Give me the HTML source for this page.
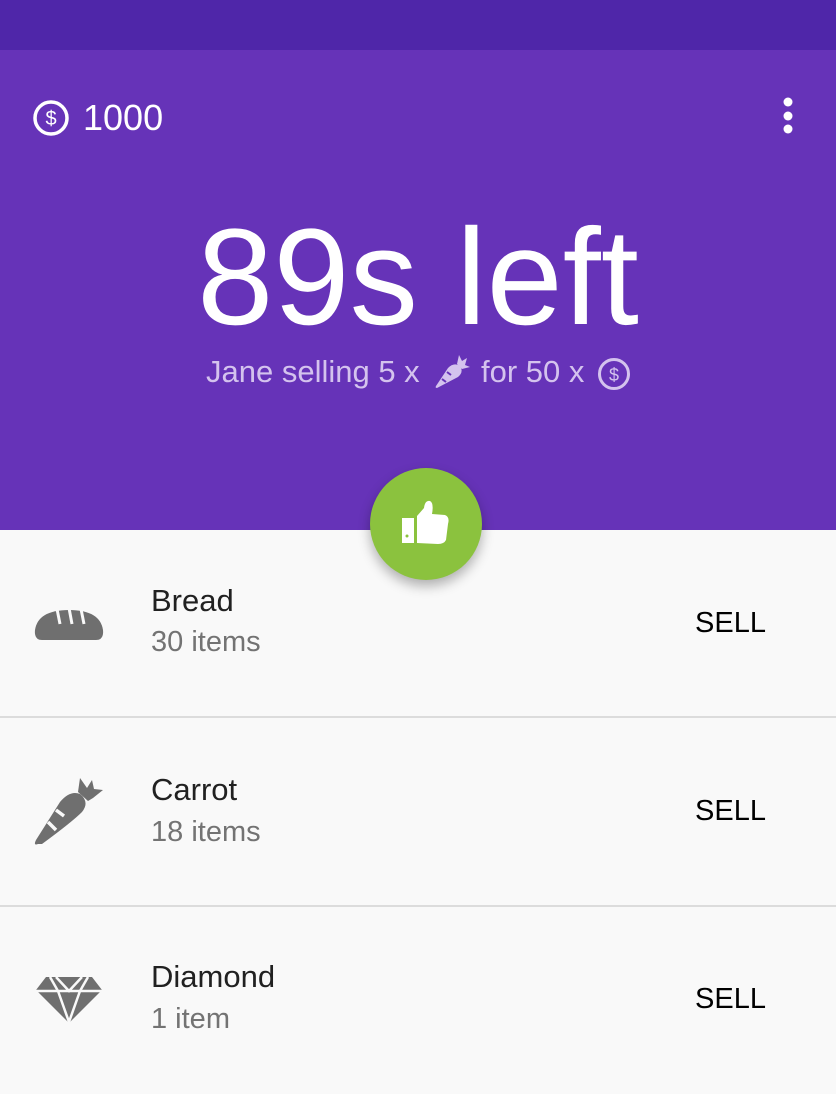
<!DOCTYPE html>
<html><head><meta charset="utf-8"><style>
*{margin:0;padding:0;box-sizing:border-box}
body{width:836px;height:1094px;overflow:hidden;background:#f9f9f9;font-family:"Liberation Sans",Roboto,sans-serif;position:relative}
.status{position:absolute;left:0;top:0;width:836px;height:50px;background:#4f26a9}
.head{position:absolute;left:0;top:50px;width:836px;height:480px;background:#6633b8}
.abs{position:absolute;white-space:nowrap}
.name{position:absolute;left:151px;font-size:31px;color:#212121}
.sub{position:absolute;left:151px;font-size:29px;color:#737373}
.sell{position:absolute;right:70px;font-size:29px;color:#000}
.div{position:absolute;left:0;width:836px;height:2px;background:#dcdcdc}
.st{position:absolute;font-size:31px;color:#d4c3ee;white-space:nowrap}
</style></head><body>
<div class="status"></div>
<div class="head"></div>
<svg class="abs" style="left:32px;top:99px" width="38" height="38" viewBox="0 0 38 38"><circle cx="19" cy="19" r="16" fill="none" stroke="#fff" stroke-width="3.5"/><text x="19" y="26" text-anchor="middle" font-size="20" font-family="Liberation Sans" fill="#fff">$</text></svg>
<div class="abs" style="left:83px;top:97px;font-size:36px;color:#fff">1000</div>
<svg class="abs" style="left:780px;top:97px" width="16" height="40"><circle cx="8" cy="5" r="4.5" fill="#fff"/><circle cx="8" cy="19" r="4.5" fill="#fff"/><circle cx="8" cy="32" r="4.5" fill="#fff"/></svg>
<div class="abs" style="left:0;width:836px;text-align:center;top:198px;font-size:137px;line-height:160px;color:#fff">89s left</div>
<div class="st" style="left:206px;top:354px">Jane selling 5 x</div>
<div class="st" style="left:481px;top:354px">for 50 x</div>
<svg class="abs" style="left:434px;top:354px" width="36" height="36" viewBox="0 0 36 36"><g fill="#d4c3ee"><path d="M3 34 Q1 34 2 32 L14 14 Q20 8 26 12 Q30 18 24 23 Z"/><path d="M23 10 L25 1 L28 7 L33 4 L31 11 L36 13 L28 15 Z"/></g><path d="M8 25 L12 28 M13 18 L17 21" stroke="#6633b8" stroke-width="2"/></svg>
<svg class="abs" style="left:597px;top:357px" width="34" height="34" viewBox="0 0 34 34"><circle cx="17" cy="17" r="14.5" fill="none" stroke="#d4c3ee" stroke-width="3"/><text x="17" y="24" text-anchor="middle" font-size="18" font-family="Liberation Sans" fill="#d4c3ee">$</text></svg>
<div class="abs" style="left:370px;top:468px;width:112px;height:112px;border-radius:50%;background:#8bc23e;box-shadow:0 6px 12px rgba(0,0,0,.3)"></div>
<svg class="abs" style="left:400px;top:498px" width="52" height="52" viewBox="0 0 52 52"><rect x="2" y="20" width="12" height="25" fill="#fff"/><circle cx="7" cy="38" r="1.5" fill="#8bc23e"/><path d="M17 18 L24 10 Q25 2 30 3 Q34 5 32 16 L45 17 Q50 19 48 26 L46 42 Q44 46 38 46 L17 45 Z" fill="#fff"/></svg>

<svg class="abs" style="left:34px;top:604px" width="70" height="38" viewBox="0 0 70 38"><path d="M8 36 Q0 36 1 26 Q4 6 35 6 Q66 6 69 26 Q70 36 62 36 Z" fill="#6f6f6f"/><path d="M23 5 L26 20 M35 4 L38 20 M47 5 L50 20" stroke="#f9f9f9" stroke-width="3"/></svg>
<div class="name" style="top:583px">Bread</div>
<div class="sub" style="top:626px">30 items</div>
<div class="sell" style="top:607px">SELL</div>
<div class="div" style="top:716px"></div>

<svg class="abs" style="left:34px;top:776px" width="70" height="72" viewBox="0 0 70 72"><g fill="#6f6f6f"><path d="M4 68 Q-1 70 2 64 L26 26 Q36 14 46 18 Q56 26 48 36 Q38 46 8 68 Z"/><path d="M44 16 L46 2 L53 12 L58 4 L60 13 L69 14 L59 22 L54 25 Z"/></g><path d="M14 46 L22 54 M22 34 L30 40" stroke="#f9f9f9" stroke-width="3.5"/></svg>
<div class="name" style="top:772px">Carrot</div>
<div class="sub" style="top:816px">18 items</div>
<div class="sell" style="top:795px">SELL</div>
<div class="div" style="top:905px"></div>

<svg class="abs" style="left:34px;top:976px" width="70" height="48" viewBox="0 0 70 48"><path d="M12 1 L58 1 L68 14 L35 47 L2 14 Z" fill="#6f6f6f"/><path d="M2 15 L68 15 M22 1 L35 15 L48 1 M16 1 L24 15 L35 46 L46 15 L54 1" stroke="#f9f9f9" stroke-width="2.5" fill="none"/></svg>
<div class="name" style="top:959px">Diamond</div>
<div class="sub" style="top:1003px">1 item</div>
<div class="sell" style="top:983px">SELL</div>
</body></html>
